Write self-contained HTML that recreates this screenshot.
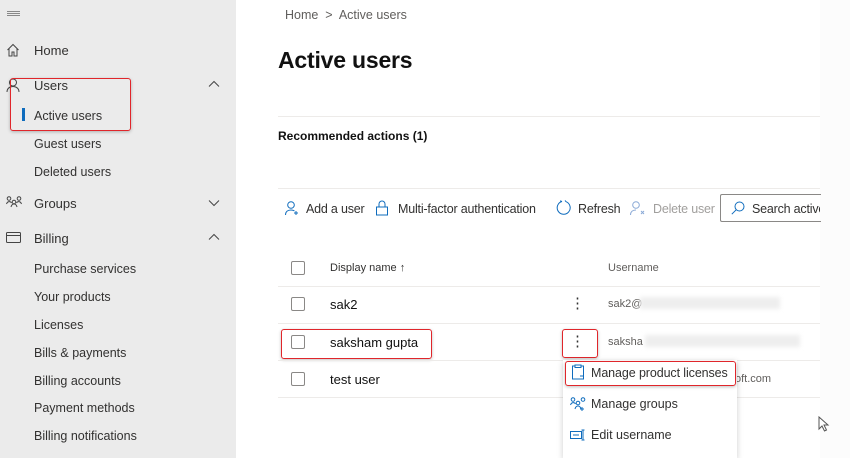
<!DOCTYPE html>
<html><head><meta charset="utf-8"><style>
*{margin:0;padding:0;box-sizing:border-box}
body{width:850px;height:458px;overflow:hidden;background:#fff;font-family:"Liberation Sans",sans-serif;color:#323130;position:relative}
.a{position:absolute;white-space:nowrap}
#side{position:absolute;left:0;top:0;width:236px;height:458px;background:#ebebeb}
.nav{font-size:13px;color:#323130}
.sub{font-size:12.5px;color:#323130}
.red{position:absolute;border:1.5px solid #e0262b;border-radius:3px;box-shadow:0 1px 3px rgba(0,0,0,.25)}
.cb{position:absolute;width:14px;height:14px;border:1px solid #8a8886;border-radius:2px;background:#fff}
.hr{position:absolute;height:1px;background:#edebe9}
.tb{font-size:12.5px;color:#323130;letter-spacing:-0.2px}
svg{position:absolute}
</style></head><body>
<div id="side">
<div class="a" style="left:7px;top:11px;width:13px;height:1px;background:#888;box-shadow:0 2px 0 #888,0 4px 0 #888"></div>
<svg style="left:6px;top:43px" width="14" height="14" viewBox="0 0 14 14" fill="none" stroke="#444" stroke-width="1"><path d="M1.5 7L7 1.5 12.5 7M3 5.5V13h3V9h2v4h3V5.5"/></svg>
<div class="a nav" style="left:34px;top:43px">Home</div>
<svg style="left:6px;top:78px" width="14" height="14" viewBox="0 0 14 14" fill="none" stroke="#444" stroke-width="1"><circle cx="7" cy="4.5" r="3.5"/><path d="M1 14c0-3.5 2.7-5.5 6-5.5s6 2 6 5.5"/></svg>
<div class="a nav" style="left:34px;top:78px">Users</div>
<svg style="left:208px;top:80px" width="12" height="8" viewBox="0 0 12 8" fill="none" stroke="#444"><path d="M1 6.5L6 1.5 11 6.5"/></svg>
<div class="a" style="left:22px;top:108px;width:3px;height:13px;background:#0f6cbd"></div>
<div class="a sub" style="left:34px;top:109px">Active users</div>
<div class="red" style="left:10px;top:78px;width:121px;height:53px"></div>
<div class="a sub" style="left:34px;top:137px">Guest users</div>
<div class="a sub" style="left:34px;top:165px">Deleted users</div>
<svg style="left:6px;top:196px" width="16" height="12" viewBox="0 0 16 12" fill="none" stroke="#444" stroke-width="1"><circle cx="3" cy="2.5" r="1.8"/><circle cx="13" cy="2.5" r="1.8"/><path d="M0.5 8c1-3 4-3 5-1M15.5 8c-1-3-4-3-5-1M5 11c1-4 5-4 6 0"/><circle cx="8" cy="6" r="1.8"/></svg>
<div class="a nav" style="left:34px;top:196px">Groups</div>
<svg style="left:208px;top:199px" width="12" height="8" viewBox="0 0 12 8" fill="none" stroke="#444"><path d="M1 1.5L6 6.5 11 1.5"/></svg>
<svg style="left:6px;top:232px" width="15" height="12" viewBox="0 0 15 12" fill="none" stroke="#444"><rect x="0.5" y="0.5" width="14" height="10" rx="1"/><path d="M0.5 3.5h14"/></svg>
<div class="a nav" style="left:34px;top:231px">Billing</div>
<svg style="left:208px;top:233px" width="12" height="8" viewBox="0 0 12 8" fill="none" stroke="#444"><path d="M1 6.5L6 1.5 11 6.5"/></svg>
<div class="a sub" style="left:34px;top:262px">Purchase services</div>
<div class="a sub" style="left:34px;top:290px">Your products</div>
<div class="a sub" style="left:34px;top:318px">Licenses</div>
<div class="a sub" style="left:34px;top:346px">Bills &amp; payments</div>
<div class="a sub" style="left:34px;top:374px">Billing accounts</div>
<div class="a sub" style="left:34px;top:401px">Payment methods</div>
<div class="a sub" style="left:34px;top:429px">Billing notifications</div>
</div>
<div class="a" style="left:820px;top:0;width:30px;height:458px;background:#fcfcfc"></div>

<div class="a" style="left:285px;top:8px;font-size:12.5px;color:#605e5c">Home &nbsp;&gt;&nbsp; Active users</div>
<div class="a" style="left:278px;top:47px;font-size:23px;font-weight:bold;color:#111;letter-spacing:-0.2px">Active users</div>
<div class="hr" style="left:278px;top:116px;width:542px"></div>
<div class="a" style="left:278px;top:129px;font-size:12px;font-weight:bold;color:#111">Recommended actions (1)</div>
<div class="hr" style="left:278px;top:188px;width:542px"></div>

<svg style="left:285px;top:201px" width="14" height="15" viewBox="0 0 14 15" fill="none" stroke="#0f6cbd"><circle cx="6" cy="4" r="3.3"/><path d="M0.5 14c0-3.5 2.5-5 5.5-5 1.5 0 2.5.3 3.5 1M11 10v4M9 12h4"/></svg>
<div class="a tb" style="left:306px;top:202px">Add a user</div>
<svg style="left:376px;top:200px" width="12" height="16" viewBox="0 0 12 16" fill="none" stroke="#0f6cbd"><path d="M3 7V4a3 3 0 016 0v3"/><rect x="0.5" y="7" width="11" height="8"/></svg>
<div class="a tb" style="left:398px;top:202px">Multi-factor authentication</div>
<svg style="left:556px;top:200px" width="16" height="16" viewBox="0 0 16 16" fill="none" stroke="#0f6cbd"><path d="M6 1.5A6.5 6.5 0 1010 1.7M10 1.7L9 0.5M6 1.5L4 0.8"/></svg>
<div class="a tb" style="left:578px;top:202px">Refresh</div>
<svg style="left:630px;top:201px" width="16" height="15" viewBox="0 0 16 15" fill="none" stroke="#8aa9d6"><circle cx="6" cy="4" r="3.3"/><path d="M0.5 14c0-3.5 2.5-5 5.5-5M11 10l3 3M14 10l-3 3"/></svg>
<div class="a tb" style="left:653px;top:202px;color:#a19f9d">Delete user</div>
<div class="a" style="left:720px;top:194px;width:101px;height:28px;border:1px solid #8a8886;border-right:none;border-radius:2px 0 0 2px"></div>
<svg style="left:731px;top:201px" width="14" height="14" viewBox="0 0 14 14" fill="none" stroke="#0f6cbd"><circle cx="8.5" cy="5.5" r="4.5"/><path d="M5.3 8.7L0.8 13.2"/></svg>
<div class="a tb" style="left:752px;top:202px;width:68px;overflow:hidden">Search active</div>

<div class="cb" style="left:291px;top:261px"></div>
<div class="a" style="left:330px;top:262px;font-size:11px;color:#323130">Display name ↑</div>
<div class="a" style="left:608px;top:262px;font-size:11px;color:#605e5c">Username</div>
<div class="hr" style="left:278px;top:286px;width:542px"></div>

<div class="cb" style="left:291px;top:297px"></div>
<div class="a" style="left:330px;top:297px;font-size:13px;color:#111">sak2</div>
<div class="a" style="left:570px;top:294px;font-size:15px;color:#333">⋮</div>
<div class="a" style="left:608px;top:298px;font-size:11px;color:#605e5c">sak2@</div>
<div class="a" style="left:640px;top:297px;width:140px;height:12px;background:#eee;filter:blur(2px)"></div>
<div class="hr" style="left:278px;top:323px;width:542px"></div>

<div class="cb" style="left:291px;top:335px"></div>
<div class="a" style="left:330px;top:335px;font-size:13px;color:#111">saksham gupta</div>
<div class="red" style="left:281px;top:329px;width:151px;height:30px"></div>
<div class="a" style="left:570px;top:332px;font-size:15px;color:#333">⋮</div>
<div class="red" style="left:562px;top:329px;width:36px;height:29px"></div>
<div class="a" style="left:608px;top:336px;font-size:11px;color:#605e5c">saksha</div>
<div class="a" style="left:645px;top:335px;width:155px;height:12px;background:#eee;filter:blur(2px)"></div>
<div class="hr" style="left:278px;top:360px;width:542px"></div>

<div class="cb" style="left:291px;top:372px"></div>
<div class="a" style="left:330px;top:372px;font-size:13px;color:#111">test user</div>
<div class="a" style="left:735px;top:373px;font-size:11px;color:#605e5c">oft.com</div>
<div class="hr" style="left:278px;top:397px;width:542px"></div>

<div class="a" style="left:563px;top:360px;width:174px;height:98px;background:#fff;box-shadow:0 2px 6px rgba(0,0,0,.2)"></div>
<div class="red" style="left:565px;top:361px;width:171px;height:25px"></div>
<svg style="left:571px;top:364px" width="14" height="16" viewBox="0 0 14 16" fill="none" stroke="#0f6cbd"><path d="M4 2H1.5v13h11V2H10M4 1h6v2.5H4z M9 12h4"/></svg>
<div class="a" style="left:591px;top:366px;font-size:12.5px;color:#323130;letter-spacing:-0.1px">Manage product licenses</div>
<svg style="left:570px;top:397px" width="16" height="14" viewBox="0 0 16 14" fill="none" stroke="#0f6cbd"><circle cx="3" cy="2.5" r="1.8"/><circle cx="13" cy="2.5" r="1.8"/><circle cx="8" cy="6" r="1.8"/><path d="M0.5 8c1-3 4-3 5-1M5 12c1-4 5-4 6 0M12 10v4M10 12h4"/></svg>
<div class="a" style="left:591px;top:397px;font-size:12.5px;color:#323130">Manage groups</div>
<svg style="left:570px;top:429px" width="16" height="12" viewBox="0 0 16 12" fill="none" stroke="#0f6cbd"><rect x="0.5" y="2.5" width="11" height="7"/><path d="M3 6h6M13 1v10M11.5 1h3M11.5 11h3"/></svg>
<div class="a" style="left:591px;top:428px;font-size:12.5px;color:#323130">Edit username</div>

<svg style="left:818px;top:416px" width="12" height="16" viewBox="0 0 12 16" fill="#fff" stroke="#555"><path d="M1 1v12l3-3 2.5 5 2-1-2.5-5h4z"/></svg>
</body></html>
